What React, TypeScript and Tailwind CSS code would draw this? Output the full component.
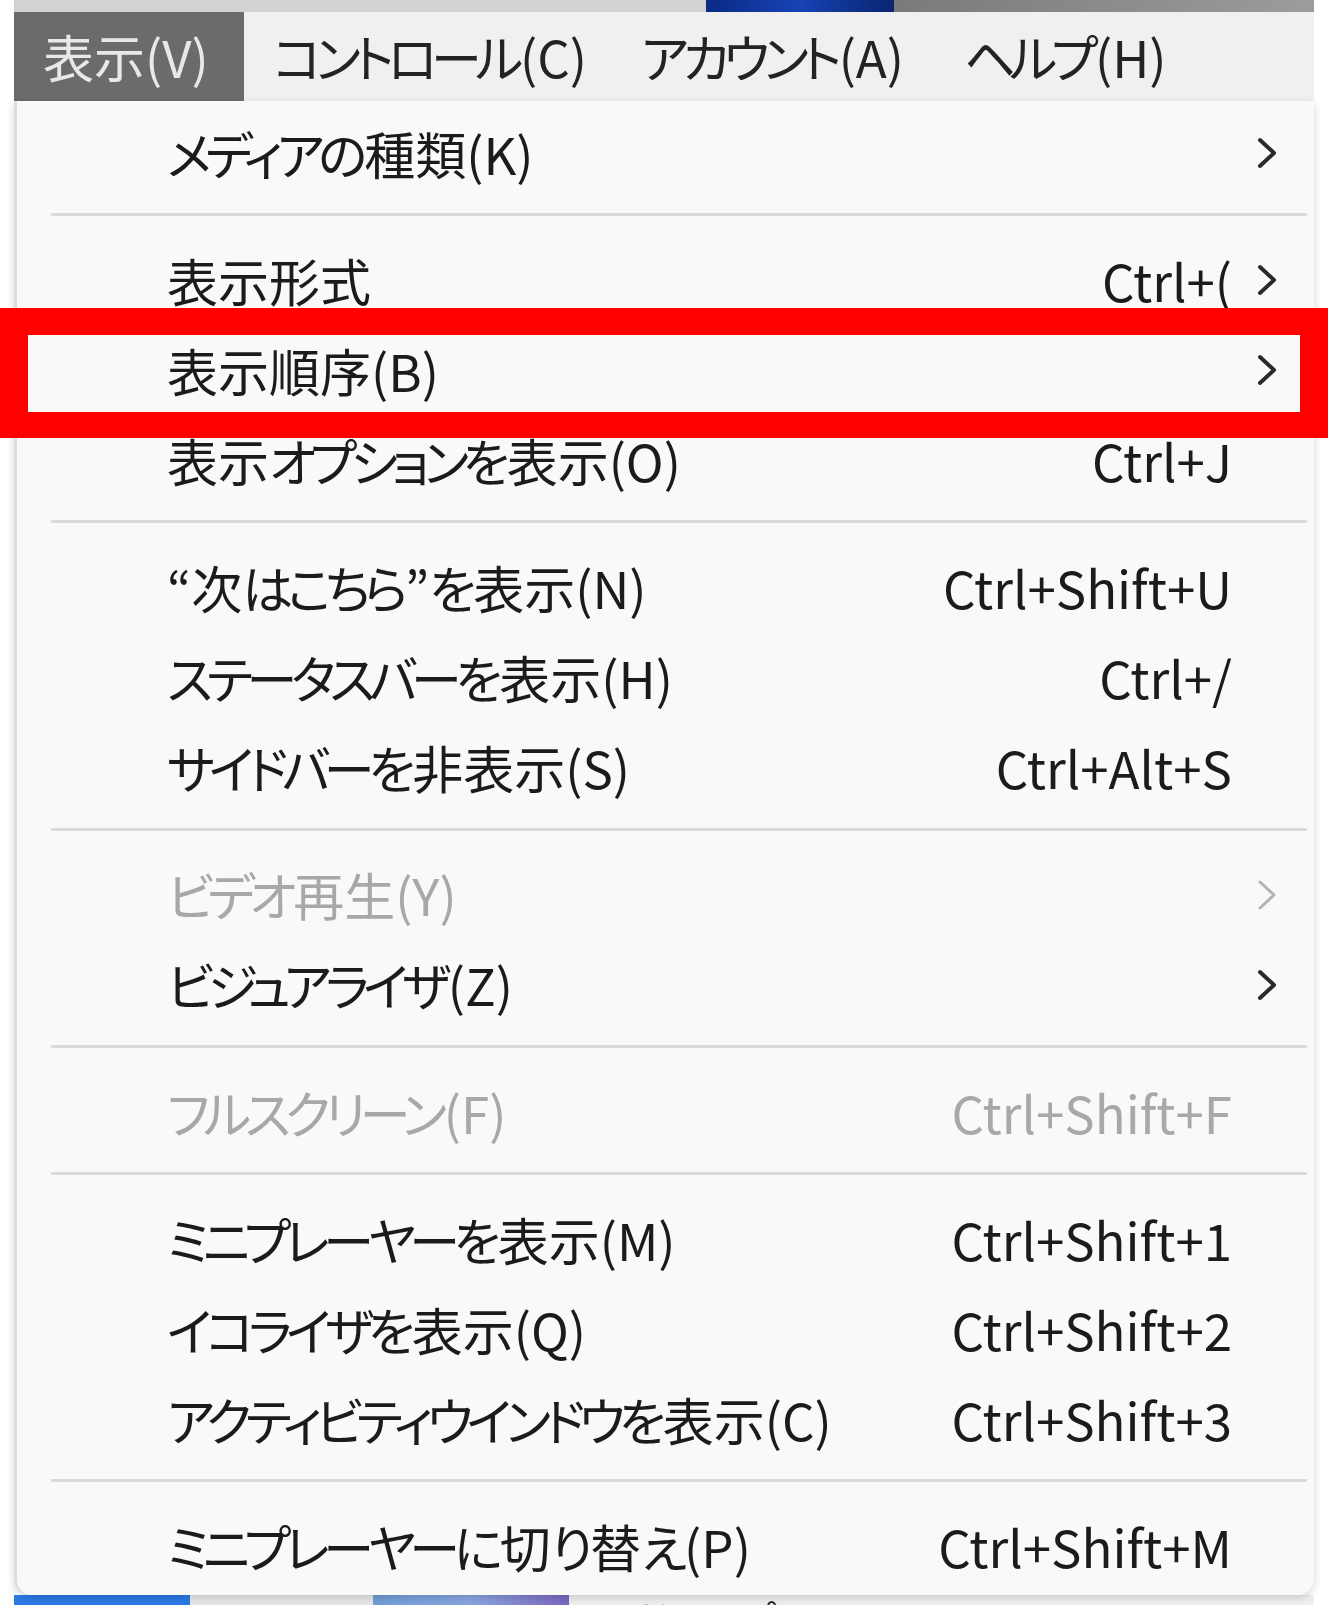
import React from 'react';

type Item =
  | { kind: 'sep' }
  | { kind: 'item'; label: string; shortcut?: string; sub?: boolean; disabled?: boolean };

const items: Item[] = [
  { kind: 'item', label: 'メディアの種類(K)', sub: true },
  { kind: 'sep' },
  { kind: 'item', label: '表示形式', shortcut: 'Ctrl+(', sub: true },
  { kind: 'item', label: '表示順序(B)', sub: true },
  { kind: 'item', label: '表示オプションを表示(O)', shortcut: 'Ctrl+J' },
  { kind: 'sep' },
  { kind: 'item', label: '“次はこちら”を表示(N)', shortcut: 'Ctrl+Shift+U' },
  { kind: 'item', label: 'ステータスバーを表示(H)', shortcut: 'Ctrl+/' },
  { kind: 'item', label: 'サイドバーを非表示(S)', shortcut: 'Ctrl+Alt+S' },
  { kind: 'sep' },
  { kind: 'item', label: 'ビデオ再生(Y)', sub: true, disabled: true },
  { kind: 'item', label: 'ビジュアライザ(Z)', sub: true },
  { kind: 'sep' },
  { kind: 'item', label: 'フルスクリーン(F)', shortcut: 'Ctrl+Shift+F', disabled: true },
  { kind: 'sep' },
  { kind: 'item', label: 'ミニプレーヤーを表示(M)', shortcut: 'Ctrl+Shift+1' },
  { kind: 'item', label: 'イコライザを表示(Q)', shortcut: 'Ctrl+Shift+2' },
  { kind: 'item', label: 'アクティビティウインドウを表示(C)', shortcut: 'Ctrl+Shift+3' },
  { kind: 'sep' },
  { kind: 'item', label: 'ミニプレーヤーに切り替え(P)', shortcut: 'Ctrl+Shift+M' },
];

const menus = [
  { label: '表示(V)', w: 'w-[230px]' },
  { label: 'コントロール(C)', w: 'w-[368px]' },
  { label: 'アカウント(A)', w: 'w-[323px]' },
  { label: 'ヘルプ(H)', w: 'w-[260px]' },
];

// kana in Yu Gothic UI are narrower than in Noto, so tighten them
const Label: React.FC<{ text: string }> = ({ text }) => (
  <>
    {text.split(/([\u3040-\u30ff]+)/).map((part, i) =>
      /[\u3040-\u30ff]/.test(part) ? (
        <span key={i} className="tracking-[-0.12em] mr-[3px]">
          {part}
        </span>
      ) : (
        <span key={i}>{part}</span>
      )
    )}
  </>
);

const Chevron: React.FC<{ disabled?: boolean }> = ({ disabled }) => (
  <svg width="24" height="34" viewBox="0 0 24 34" fill="none">
    <path
      d="M5 4 L19 17 L5 30"
      stroke={disabled ? '#b4b4b4' : '#2a2a2a'}
      strokeWidth={disabled ? 3 : 4}
      strokeLinecap="round"
      strokeLinejoin="round"
    />
  </svg>
);

export default function App() {
  return (
    <div className="relative w-[1328px] h-[1605px] overflow-hidden bg-white font-['Noto_Sans_CJK_JP','Noto_Sans',sans-serif] [font-feature-settings:'palt']">
      <div className="ml-[14px] w-[1300px] flex flex-col">
        {/* window strip behind the menu bar */}
        <div className="h-[12px] flex">
          <div className="w-[692px] bg-[#d2d2d2]" />
          <div className="w-[188px] bg-gradient-to-r from-[#0b2a86] via-[#1743b5] to-[#0a2470]" />
          <div className="flex-1 bg-gradient-to-r from-[#7a7a7a] to-[#9c9c9c]" />
        </div>

        {/* menu bar */}
        <div className="h-[89px] flex bg-[#f0f0f0]">
          {menus.map((m, i) => (
            <div
              key={m.label}
              className={
                m.w +
                (i === 0
                  ? ' h-full flex items-center pl-[29px] bg-[#6b6b6b] text-[#e8e8e8] text-[51px] leading-none whitespace-nowrap'
                  : ' h-full flex items-center pl-[29px] text-[#232323] text-[51px] leading-none whitespace-nowrap')
              }
            >
              <Label text={m.label} />
            </div>
          ))}
        </div>

        {/* dropdown */}
        <div className="relative z-10 bg-[#f9f9f9] border-l-[3px] border-[#dedede] rounded-b-[16px] shadow-[0_3px_8px_rgba(0,0,0,0.16)] pt-[7px] pb-[3px]">
          {items.map((it, i) =>
            it.kind === 'sep' ? (
              <div key={i} className="h-[37.3px] pt-[15px] pl-[34px] pr-[7px]">
                <div className="h-[3px] bg-[#dadada]" />
              </div>
            ) : (
              <div
                key={i}
                className={
                  'h-[90px] flex items-center pl-[150px] pr-[12px] text-[51px] leading-none ' +
                  (it.disabled ? 'text-[#a8a8a8]' : 'text-[#1b1b1b]')
                }
              >
                <span className="flex-1 whitespace-nowrap">
                  <Label text={it.label} />
                </span>
                <span className="whitespace-nowrap">{it.shortcut ?? ''}</span>
                <span className="w-[70px] flex justify-center">
                  {it.sub ? <Chevron disabled={it.disabled} /> : null}
                </span>
              </div>
            )
          )}
        </div>

        {/* window content peeking below the menu */}
        <div className="h-[10px] flex overflow-hidden">
          <div className="w-[176px] bg-[#2b7be6]" />
          <div className="w-[183px] bg-[#e8e8e8]" />
          <div className="w-[196px] bg-gradient-to-r from-[#6f9fd8] via-[#8aa6e0] to-[#7b66c0]" />
          <div className="flex-1 bg-[#f0f0f0] pl-[68px] pt-[3px] text-[40px] leading-none text-[#222]">
            ドロップ
          </div>
        </div>
      </div>

      {/* red annotation box */}
      <div className="absolute z-20 left-0 top-[308px] w-[1328px] h-[130px] border-t-[27px] border-b-[26px] border-x-[28px] border-[#ff0000]" />
    </div>
  );
}
